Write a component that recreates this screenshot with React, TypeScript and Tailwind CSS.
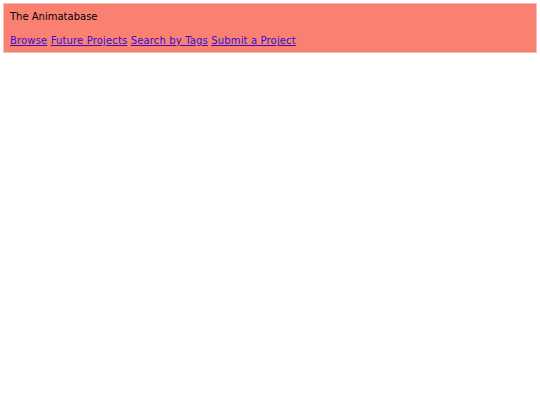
export default function App() {
  return (
    <div className="bg-white min-h-[405px] p-[3px] font-['DejaVu_Sans',sans-serif] text-[10px] text-black">
      <div className="bg-[#fa8072] px-[6px] pt-[7px] pb-[5px] border border-[#f3c0b8]">
        <div className="leading-[12px]">The Animatabase</div>
        <nav className="mt-[12px] leading-[12px] tracking-[0.15px]">
          <a href="#" className="text-[#3311cc] underline">Browse</a>{' '}
          <a href="#" className="text-[#3311cc] underline">Future Projects</a>{' '}
          <a href="#" className="text-[#3311cc] underline">Search by Tags</a>{' '}
          <a href="#" className="text-[#3311cc] underline">Submit a Project</a>
        </nav>
      </div>
    </div>
  );
}
